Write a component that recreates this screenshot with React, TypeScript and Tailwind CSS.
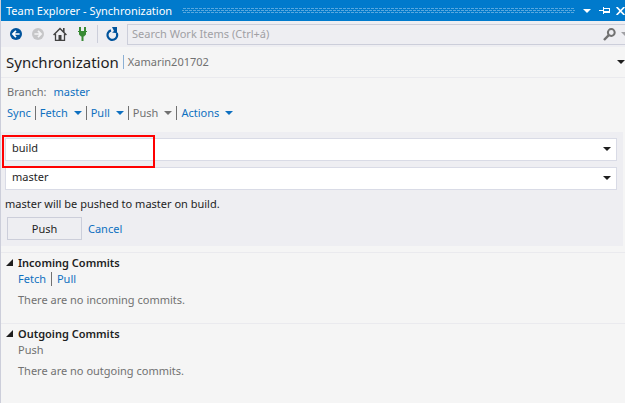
import React from "react";

function Caret({ className = "" }: { className?: string }) {
  return (
    <svg className={`h-1 w-2 shrink-0 ${className}`} viewBox="0 0 8 4" fill="currentColor" aria-hidden="true">
      <path d="M0 0h8L4 4z" />
    </svg>
  );
}

function Separator() {
  return <span className="h-[14px] w-px bg-[#717171]" aria-hidden="true" />;
}

function TitleBar() {
  return (
    <header className="flex h-[21px] items-center bg-[#007acc] pl-[5px] text-white">
      <h1 className="leading-4">Team Explorer - Synchronization</h1>
      <span
        className="mr-2 ml-[10px] h-[5px] min-w-0 flex-1 bg-[conic-gradient(from_90deg_at_1px_1px,transparent_270deg,#59a8de_0),conic-gradient(from_90deg_at_1px_1px,transparent_270deg,#59a8de_0)] bg-[size:4px_4px] bg-[position:0_0,2px_2px]"
        aria-hidden="true"
      />
      <button aria-label="Window position" className="flex w-2 justify-center">
        <Caret />
      </button>
      <button aria-label="Auto hide" className="ml-2 w-[11px]">
        <svg className="h-[9px] w-[11px]" viewBox="0 0 11 9" fill="currentColor" shapeRendering="crispEdges">
          <path d="M0 4h4v1H0zM4 1h1v7H4zM5 2h6v5H5zM5 3v2h5V3z" fillRule="evenodd" />
        </svg>
      </button>
      <button aria-label="Close" className="ml-[6px] w-[9px]">
        <svg className="h-2 w-[9px]" viewBox="0 0 9 8" stroke="currentColor" strokeWidth="1.7">
          <path d="M.6 0l7.8 8M8.4 0L.6 8" />
        </svg>
      </button>
    </header>
  );
}

function Toolbar() {
  return (
    <div className="flex h-[26px] items-center bg-[#eeeef2] pl-[9px]">
      <button aria-label="Back">
        <svg className="h-3 w-3" viewBox="0 0 12 12">
          <circle cx="6" cy="6" r="6" fill="#00539c" />
          <path d="M9.6 6H3M6 2.9L2.9 6 6 9.1" fill="none" stroke="#fff" strokeWidth="1.7" />
        </svg>
      </button>
      <button aria-label="Forward" className="ml-[10px]">
        <svg className="h-3 w-3" viewBox="0 0 12 12">
          <circle cx="6" cy="6" r="6" fill="#c6c6c8" />
          <path d="M2.4 6H9M6 2.9L9.1 6 6 9.1" fill="none" stroke="#f3f3f5" strokeWidth="1.7" />
        </svg>
      </button>
      <button aria-label="Home" className="ml-[9px]">
        <svg className="h-[14px] w-[14px]" viewBox="0 0 14 14" fill="none" stroke="#424242">
          <path d="M.6 8L7 1.5 13.4 8" strokeWidth="1.5" />
          <path d="M2.5 7v6.3h9V7" strokeWidth="1.3" />
          <path d="M10.8 1v4" strokeWidth="1.6" />
          <path d="M5.5 8h3v5h-3z" fill="#424242" stroke="none" />
        </svg>
      </button>
      <button aria-label="Manage connections" className="ml-[11px]">
        <svg className="h-[14px] w-[9px]" viewBox="0 0 9 14" fill="#388a34">
          <path d="M1 0h2v4H1zM6 0h2v4H6zM0 4h9v1H0zM1 5h7v2.5L6 9.5H3l-2-2zM3.5 9.5h2V14h-2z" />
        </svg>
      </button>
      <span className="ml-[10px] h-[18px] w-px bg-[#ccceda]" aria-hidden="true" />
      <button aria-label="Refresh" className="ml-2">
        <svg className="h-[14px] w-[13px]" viewBox="0 0 13 14" fill="none" stroke="#00539c" strokeWidth="2.2">
          <path d="M5 3.4A4.8 4.8 0 1 0 10.7 6" />
          <path d="M6 0h5v6H9.5L6 5.5 8 4z" fill="#00539c" stroke="none" />
        </svg>
      </button>
      <div className="ml-2 flex h-[21px] min-w-0 flex-1 items-center border-y border-l border-[#ccceda]">
        <input
          type="search"
          aria-label="Search Work Items"
          placeholder="Search Work Items (Ctrl+á)"
          className="min-w-0 flex-1 bg-transparent pl-1 leading-4 outline-none placeholder:text-[#a0a0a4]"
        />
        <button aria-label="Search">
          <svg className="h-[13px] w-[13px]" viewBox="0 0 13 13" fill="none" stroke="#717171">
            <circle cx="8.3" cy="4.5" r="3.4" strokeWidth="2" />
            <path d="M5.8 7.2L1 12" strokeWidth="2.4" />
          </svg>
        </button>
        <button aria-label="Search options" className="ml-[5px] w-1 overflow-hidden text-[#a0a0a4]">
          <Caret />
        </button>
      </div>
    </div>
  );
}

function MenuLink({ label, muted = false }: { label: string; muted?: boolean }) {
  return (
    <button disabled={muted} className={`flex items-center gap-[6px] ${muted ? "text-[#717171]" : "text-[#0e70c0]"}`}>
      {label}
      <Caret />
    </button>
  );
}

function Combo({ label, value }: { label: string; value: string }) {
  return (
    <div className="relative">
      <select
        aria-label={label}
        defaultValue={value}
        className="block h-[23px] w-full appearance-none border border-[#d9dbe6] bg-white px-[6px] pb-1 leading-4 text-[#1e1e1e] outline-none"
      >
        <option>{value}</option>
      </select>
      <Caret className="pointer-events-none absolute top-[9px] right-[6px]" />
    </div>
  );
}

function Commits({ title, empty, children }: { title: string; empty: string; children: React.ReactNode }) {
  return (
    <section className="flex h-[71px] items-start border-t border-[#eaeaee] pt-[2px] pl-[5px]">
      <button aria-label={`Collapse ${title}`} className="mt-1 w-3">
        <svg className="h-[7px] w-[7px]" viewBox="0 0 7 7" fill="#1e1e1e">
          <path d="M7 0v7H0z" />
        </svg>
      </button>
      <div>
        <h3 className="leading-4 font-semibold text-[#1e1e1e]">{title}</h3>
        <div className="flex h-4 items-center gap-[5px] text-[#0e70c0]">{children}</div>
        <p className="mt-[5px] leading-4 text-[#717171]">{empty}</p>
      </div>
    </section>
  );
}

export default function App() {
  return (
    <div className="min-h-screen overflow-hidden border-l border-[#ccceda] bg-[#f5f5f5] font-['Noto_Sans',sans-serif] text-[11px] leading-4 text-[#1e1e1e]">
      <TitleBar />
      <Toolbar />
      <div className="flex h-[31px] items-center border-b border-[#eaeaee] pl-[5px]">
        <h2 className="text-[15px] leading-5">Synchronization</h2>
        <span className="ml-1 h-[14px] w-px bg-[#8cb0d4]" aria-hidden="true" />
        <span className="ml-1 text-[#717171]">Xamarin201702</span>
        <button aria-label="Page options" className="ml-auto">
          <Caret />
        </button>
      </div>
      <main>
        <div className="px-[6px] pt-[6px] pb-[11px]">
          <div className="flex gap-[7px]">
            <span className="text-[#717171]">Branch:</span>
            <a href="#master" className="text-[#0e70c0]">master</a>
          </div>
          <nav className="mt-[5px] flex items-center gap-1">
            <a href="#sync" className="text-[#0e70c0]">Sync</a>
            <Separator />
            <MenuLink label="Fetch" />
            <Separator />
            <MenuLink label="Pull" />
            <Separator />
            <MenuLink label="Push" muted />
            <Separator />
            <MenuLink label="Actions" />
          </nav>
        </div>
        <form className="relative mr-[2px] bg-[#eeeef2] pt-[6px] pr-[6px] pb-[6px] pl-1">
          <div className="flex flex-col gap-[6px]">
            <Combo label="Remote" value="build" />
            <Combo label="Remote branch" value="master" />
          </div>
          <p className="mt-[6px]">master will be pushed to master on build.</p>
          <div className="mt-[5px] flex items-center gap-[6px] pl-[2px]">
            <button type="button" className="h-[23px] w-[75px] border border-[#ccceda] bg-[#eeeef2]">Push</button>
            <a href="#cancel" className="text-[#0e70c0]">Cancel</a>
          </div>
          <div className="pointer-events-none absolute top-[3px] left-px h-[33px] w-[153px] border-2 border-[#ff0000]" />
        </form>
        <div className="mt-[6px]">
          <Commits title="Incoming Commits" empty="There are no incoming commits.">
            <a href="#fetch">Fetch</a>
            <Separator />
            <a href="#pull">Pull</a>
          </Commits>
          <Commits title="Outgoing Commits" empty="There are no outgoing commits.">
            <button disabled className="text-[#717171]">Push</button>
          </Commits>
        </div>
      </main>
    </div>
  );
}
